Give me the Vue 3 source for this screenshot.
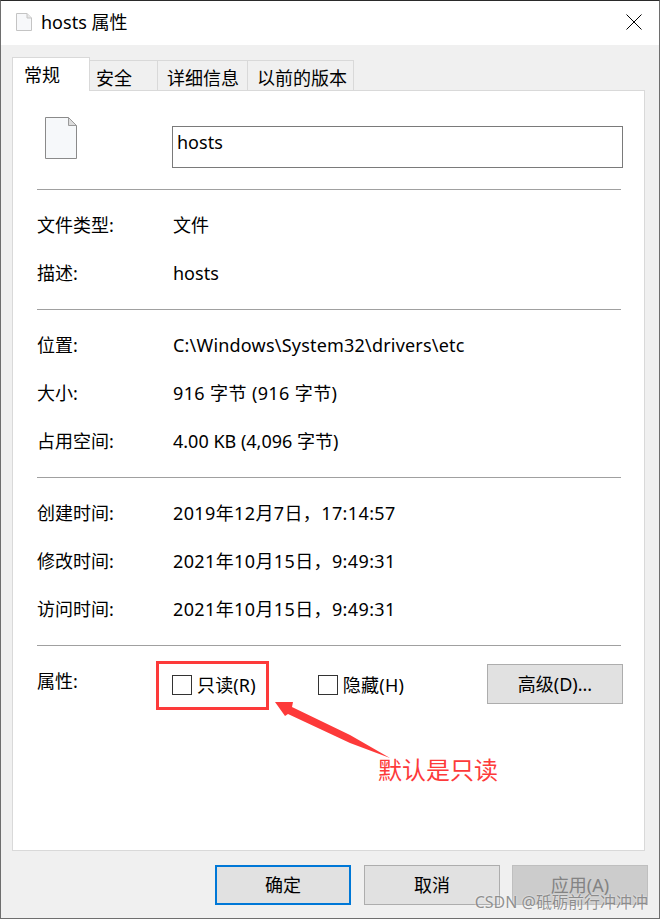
<script setup>
const tabs = [
  { name: '常规', cls: 'tab-general' },
  { name: '安全', cls: 'tab-security' },
  { name: '详细信息', cls: 'tab-details' },
  { name: '以前的版本', cls: 'tab-previous' }
]
const sections = [
  [
    { label: '文件类型:', value: '文件' },
    { label: '描述:', value: 'hosts' }
  ],
  [
    { label: '位置:', value: 'C:\\Windows\\System32\\drivers\\etc', cls: 'track-s' },
    { label: '大小:', value: '916 字节 (916 字节)', cls: 'track-l' },
    { label: '占用空间:', value: '4.00 KB (4,096 字节)' }
  ],
  [
    { label: '创建时间:', value: '2019年12月7日，17:14:57', cls: 'track-l' },
    { label: '修改时间:', value: '2021年10月15日，9:49:31', cls: 'track-l' },
    { label: '访问时间:', value: '2021年10月15日，9:49:31', cls: 'track-l' }
  ]
]
</script>

<template>
  <div class="window">
    <header class="titlebar">
      <svg class="title-icon" viewBox="0 0 16 18" width="16" height="18">
        <path d="M.5.5h10.5l4.5 4.500v12.500H.5z" fill="#f7f8fa" stroke="#c4c4c4" />
        <path d="M11 .5v4.500h4.500" fill="#e8e8e8" stroke="#c4c4c4" />
      </svg>
      <span class="title-text">hosts 属性</span>
      <svg class="close" viewBox="0 0 16 16" width="16" height="16">
        <path d="M.5.5l15 15M15.500.5l-15 15" stroke="#000" stroke-width="1" fill="none" />
      </svg>
    </header>

    <div class="content">
      <nav class="tabs">
        <div v-for="(t, i) in tabs" :key="t.name" class="tab" :class="[t.cls, { active: i === 0 }]">{{ t.name }}</div>
      </nav>

      <main class="panel">
        <div class="head">
          <svg class="file-icon" viewBox="0 0 32 42" width="32" height="42">
            <path d="M.5.500h23l8 8v33H.5z" fill="#f6f8fa" stroke="#8a8a8a" />
            <path d="M23.500.500v8h8z" fill="#dcdcdc" stroke="#9a9a9a" />
          </svg>
          <div class="name-input">hosts</div>
        </div>

        <section v-for="(s, i) in sections" :key="i" class="section">
          <div v-for="r in s" :key="r.label" class="row">
            <span class="label">{{ r.label }}</span>
            <span :class="r.cls">{{ r.value }}</span>
          </div>
        </section>

        <section class="section attrs">
          <span class="label attr-label">属性:</span>
          <label class="check"><i class="box"></i><span class="track-xs">只读(R)</span></label>
          <label class="check check-hidden"><i class="box"></i><span class="track-m">隐藏(H)</span></label>
          <button class="btn btn-advanced">高级(D)...</button>
        </section>
      </main>

      <footer class="footer">
        <button class="btn btn-foot btn-ok">确定</button>
        <button class="btn btn-foot">取消</button>
        <button class="btn btn-foot btn-disabled">应用(A)</button>
      </footer>
    </div>

    <div class="red-box"></div>
    <svg class="arrow" viewBox="0 0 120 64" width="120" height="64">
      <polygon points="5,7 23,7 22,12 80,40 120,63 80,48 18,19 15,21" fill="#fd3a3a" />
    </svg>
    <div class="note">默认是只读</div>
    <div class="watermark">CSDN @砥砺前行冲冲冲</div>
  </div>
</template>

<style scoped>
.window {
  position: relative;
  box-sizing: border-box;
  width: 660px;
  height: 919px;
  display: flex;
  flex-direction: column;
  overflow: hidden;
  background: #f0f0f0;
  border-top: 1px solid #2a2a2a;
  border-left: 1px solid #6e6e6e;
  border-right: 1px solid #6e6e6e;
  border-bottom: 1px solid #6e6e6e;
  font-family: "Noto Sans", "Noto Sans CJK SC", sans-serif;
  font-size: 18px;
  line-height: 24px;
  color: #000;
}
.track-xs { letter-spacing: 0.15px; }
.track-s { letter-spacing: 0.2px; }
.track-m { letter-spacing: 0.25px; }
.track-l { letter-spacing: 0.38px; }
.titlebar {
  height: 44px;
  flex: none;
  display: flex;
  align-items: center;
  padding: 0 17px 0 15px;
  background: #fff;
}
.title-icon { margin-top: -2px; }
.title-text { margin-left: 9px; margin-top: -2px; }
.close { margin-left: auto; margin-top: -2px; }
.content {
  flex: 1;
  min-height: 0;
  display: flex;
  flex-direction: column;
  padding: 12px 14px 0 11px;
}
.tabs {
  display: flex;
  align-items: flex-end;
  height: 34px;
  margin-bottom: -1px;
  position: relative;
  z-index: 1;
}
.tab {
  box-sizing: border-box;
  height: 31px;
  border: 1px solid #d9d9d9;
  border-left: 0;
  background: #f0f0f0;
  padding-top: 5px;
  white-space: nowrap;
}
.tab.active {
  height: 34px;
  background: #fff;
  border-left: 1px solid #d9d9d9;
  border-bottom: 0;
  padding-top: 5px;
}
.tab-general { width: 78px; padding-left: 11px; }
.tab-security { width: 68px; padding-left: 6px; }
.tab-details { width: 90px; padding-left: 9px; }
.tab-previous { width: 106px; padding-left: 9px; }
.panel {
  flex: 1;
  min-height: 0;
  background: #fff;
  border: 1px solid #d9d9d9;
  padding: 0 23px 0 24px;
}
.head {
  height: 98px;
  box-sizing: border-box;
  display: flex;
  align-items: flex-start;
  padding: 26px 0 0 8px;
}
.name-input {
  box-sizing: border-box;
  width: 451px;
  height: 42px;
  margin: 9px -2px 0 95px;
  border: 1px solid #7a7a7a;
  padding: 3px 0 0 4px;
}
.section {
  border-top: 1px solid #a0a0a0;
  padding: 11px 0 12px;
}
.row {
  display: flex;
  align-items: center;
  height: 48px;
}
.label { width: 136px; flex: none; }
.attrs {
  display: flex;
  align-items: flex-start;
  padding: 0;
  height: 100px;
  position: relative;
}
.attr-label { margin-top: 23px; }
.check {
  display: flex;
  align-items: center;
  margin-top: 27px;
  white-space: nowrap;
  margin-left: -1px;
}
.check-hidden { margin-left: 62px; }
.box {
  box-sizing: border-box;
  width: 20px;
  height: 20px;
  border: 1px solid #333;
  background: #fff;
  margin-right: 5px;
}
.btn {
  box-sizing: border-box;
  width: 136px;
  height: 40px;
  padding: 0;
  border: 1px solid #adadad;
  background: #e1e1e1;
  color: #000;
  font: inherit;
}
.btn-advanced {
  position: absolute;
  right: -2px;
  top: 18px;
}
.footer {
  flex: none;
  display: flex;
  justify-content: flex-end;
  gap: 12px;
  padding: 14px 0 13px;
  margin-right: -3px;
}
.btn-foot { flex: none; }
.btn-ok {
  border: 2px solid #0078d7;
  margin-right: 1px;
}
.btn-disabled {
  background: #ccc;
  border-color: #bfbfbf;
  color: #838383;
}
.red-box {
  position: absolute;
  left: 155px;
  top: 660px;
  width: 113px;
  height: 49px;
  box-sizing: border-box;
  border: 3px solid #fd3a3a;
}
.arrow {
  position: absolute;
  left: 269px;
  top: 694px;
  overflow: visible;
}
.note {
  position: absolute;
  left: 377px;
  top: 752px;
  font-size: 24px;
  line-height: 34px;
  color: #fd3a3a;
}
.watermark {
  position: absolute;
  right: 11px;
  top: 891px;
  font-size: 16px;
  line-height: 20px;
  color: rgba(110, 110, 110, 0.75);
  text-shadow: 0 0 2px rgba(255, 255, 255, 0.9);
  white-space: nowrap;
}
</style>

<style>
html, body { margin: 0; padding: 0; }
</style>
